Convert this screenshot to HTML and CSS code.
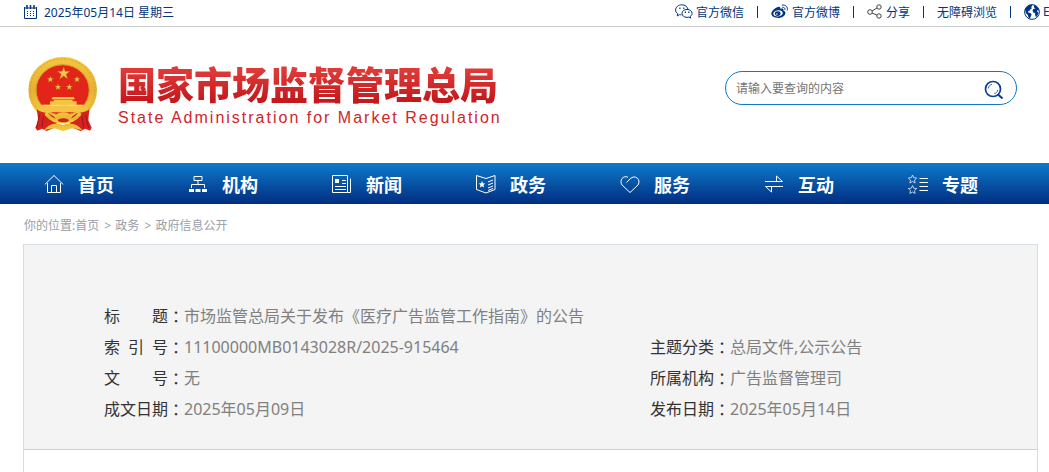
FILE: index.html
```
<!DOCTYPE html>
<html lang="zh-CN">
<head>
  <meta charset="UTF-8">
  <meta name="viewport" content="width=device-width, initial-scale=1.0">
  <title>国家市场监督管理总局</title>
  <link rel="stylesheet" href="styles.css">
</head>
<body>
  <!-- top bar -->
  <div class="topbar">
    <div class="date">
      <svg width="13" height="14" viewBox="0 0 13 14" fill="none" stroke="currentColor">
        <path d="M.5 2v11.500h12V2M0 3h13" />
        <path d="M3 0v4M6.500 0v4M10 0v4" stroke-width="1.500"/>
        <path d="M3 6.500h7M3 8.500h7M3 10.500h7" stroke-dasharray="1 2"/>
      </svg>
      <span>2025年05月14日 星期三</span>
    </div>
    <div class="top-links">
      <a href="#">
        <svg width="18" height="15" viewBox="0 0 18 15" fill="none" stroke="currentColor">
          <path d="M6.500 10.800c-.8 0-1.500 0-2-.2L2.300 12l.4-2.300C1.200 8.700.6 7.500.6 6 .6 3 3.400.8 6.800.8c3 0 5.500 1.700 6.100 4.200"/>
          <path d="M12 5.400c-2.800 0-5 1.800-5 4s2.200 4 5 4c.7 0 1.300-.1 1.800-.3l1.900 1-.5-1.700c1.200-.7 1.900-1.800 1.900-3 0-2.200-2.300-4-5.100-4z"/>
          <path d="M4.300 4.200h1.200M8.200 4.200h1.200M9.800 8.300H11M13.200 8.300h1.200" stroke-width="1.400"/>
        </svg>
        <span>官方微信</span>
      </a>
      <i class="sep"></i>
      <a href="#">
        <svg width="18" height="15" viewBox="0 0 18 15">
          <path fill="currentColor" fill-rule="evenodd" d="M6.800 3C8.500 2.300 9.600 3 9.200 4.800c2-.7 3.700-.2 3.200 1.600 1.300.5 2 1.300 2 2.500 0 2.700-3.500 5-7.300 5C3.300 13.900.3 12.100.3 9.500.3 7.200 3.800 4 6.800 3zM7 6.200c-2.800.2-4.700 1.700-4.700 3.500s2.100 2.900 4.800 2.700c2.700-.2 4.700-1.800 4.700-3.500S9.700 6 7 6.200z"/>
          <ellipse cx="6.700" cy="9.600" rx="2.800" ry="2.300" fill="currentColor"/>
          <circle cx="5.900" cy="10" r=".8" fill="#fff"/>
          <path d="M10.800 1.200c3.700-1 6.500 2 5.400 5.400M11.300 3.400c1.800-.4 3 .8 2.600 2.500" fill="none" stroke="currentColor"/>
        </svg>
        <span>官方微博</span>
      </a>
      <i class="sep"></i>
      <a href="#">
        <svg width="16" height="15" viewBox="0 0 16 15" fill="none" stroke="#444">
          <circle cx="3" cy="8" r="2.300"/>
          <circle cx="12" cy="3" r="2.200"/>
          <circle cx="12" cy="12" r="2.200"/>
          <path d="M5 7l5-3M5 9l5 2.200"/>
        </svg>
        <span>分享</span>
      </a>
      <i class="sep"></i>
      <a href="#">无障碍浏览</a>
      <i class="sep"></i>
      <a href="#">
        <svg width="16" height="16" viewBox="0 0 16 16">
          <circle cx="8" cy="8" r="7.400" fill="#fff" stroke="currentColor"/>
          <path fill="currentColor" d="M1 5.500C1.800 3 4 1.200 7.500.8L8.400 2 7 3l1 1.200-2 1.300-.6 1.700-1.500-.3.300 1.600 2 .5 1.500 1.500-1 2-.7 2.300C4.500 14 4 12.500 3.900 11L2 9.200zM9.800 1c3 .7 5 3 5.400 6l-1.500-1-.7 1.500 1.500 1.200-.9 2.600-1.500 2-1.100-2.500.2-1.800-2-.5-.7-2.200 1.300-1.500 1.800-.4-1.500-1z"/>
        </svg>
        <span>English</span>
      </a>
    </div>
  </div>

  <!-- logo + search -->
  <header class="header">
    <a href="#" class="logo">
      <svg width="70" height="75" viewBox="24 21 210 225">
        <defs>
          <linearGradient id="gold" x1="0" y1="0" x2="0" y2="1">
            <stop offset="0" stop-color="#f3c53c"/>
            <stop offset=".5" stop-color="#e5b034"/>
            <stop offset="1" stop-color="#f6cf3f"/>
          </linearGradient>
        </defs>
        <ellipse cx="128" cy="120" rx="91" ry="87" fill="#e32418" stroke="url(#gold)" stroke-width="24"/>
        <ellipse cx="128" cy="120" rx="97" ry="93" fill="none" stroke="#dba32b" stroke-width="3" stroke-dasharray="6 5"/>
        <ellipse cx="128" cy="120" rx="80" ry="76" fill="none" stroke="#d09a29" stroke-width="3"/>
        <g fill="#f8c544" stroke="#a8601b">
          <path d="M131 50l4.500 14H150l-11.500 8.500L143 87l-12-9-12 9 4.500-14.500L112 64h14.500z"/>
          <path d="M91 78l2.500 7H101l-6 4.500 2.500 7.500-6.500-4.500-6.500 4.500 2.500-7.500-6-4.500h7.500z"/>
          <path d="M171 78l2.500 7h7.500l-6 4.500 2.500 7.500-6.500-4.500-6.500 4.500 2.500-7.500-6-4.500h7.500z"/>
          <path d="M114 101l2.500 7h7.500l-6 4.500 2.500 7.500-6.500-4.500-6.500 4.500 2.500-7.500-6-4.500h7.500z"/>
          <path d="M148 101l2.500 7h7.500l-6 4.500 2.500 7.500-6.500-4.500-6.500 4.500 2.500-7.500-6-4.500h7.500z"/>
        </g>
        <path fill="#f7c344" d="M98 141h63l4 7H94zM101 149h57v5h-57zM90 154h80v10h24l-10 23H72l-10-23h28z"/>
        <path d="M70 166h118" stroke="#fff09a" stroke-width="2"/>
        <path fill="#d62320" d="M50 178c10 8 22 10 36 12l24 14v26l-30 13-14-7-14 6-6-9 9-22zM208 178c-10 8-24 10-38 12l-20 14v26l32 13 14-7 14 6 5-9-10-22z"/>
        <path d="M58 194l-8 40M70 198l-4 34M197 194l9 40M186 198l5 34" stroke="#9c161b" stroke-width="3"/>
        <path fill="none" stroke="url(#gold)" stroke-width="11" stroke-linecap="round" d="M80 193c12 15 25 22 49 22s38-8 49-22"/>
        <path fill="url(#gold)" d="M103 202c5-10 13-15 27-15s22 5 26 15l-8 8h-37zM72 240c16-19 35-24 57-15 22-9 42-4 58 15-18-4-27-6-39-3l-19 7-18-7c-12-3-22 0-39 3z"/>
        <ellipse cx="130" cy="211" rx="17" ry="6" fill="#d62320"/>
      </svg>
      <span class="site-name">
        <strong>国家市场监督管理总局</strong>
        <em>State Administration for Market Regulation</em>
      </span>
    </a>
    <form class="search">
      <input type="text" placeholder="请输入要查询的内容" aria-label="请输入要查询的内容">
      <button type="button" aria-label="搜索">
        <svg width="20" height="20" viewBox="0 0 20 20" fill="none" stroke="currentColor">
          <circle cx="9" cy="9" r="7.500" stroke-width="1.700"/>
          <path d="M14 14.500l4.500 4" stroke-width="2.200"/>
          <path d="M4.300 8.500C4.500 6.300 6 4.800 8 4.400M13.700 10c-.4 2-1.600 3.200-3.500 3.700" stroke-width=".8"/>
        </svg>
      </button>
    </form>
  </header>

  <!-- main nav -->
  <nav class="nav">
    <a href="#">
      <svg viewBox="0 0 20 20"><path d="M.8 10.500L10 1.500l9.200 9M3.500 9v9.500h13V9M7.500 18.500v-7h5v7"/></svg>
      <span>首页</span>
    </a>
    <a href="#">
      <svg viewBox="0 0 20 20"><path d="M6 2.500h8v4H6zM10 6.500v4M3.500 14v-3.500h13V14"/><path d="M1 16.500h5M7.500 16.500h5M14 16.500h5" stroke-width="3"/></svg>
      <span>机构</span>
    </a>
    <a href="#">
      <svg viewBox="0 0 20 20"><path d="M.5 1.500h15v17H.5zM15.500 18.500h3v-14M10 6.500h4M10 9.500h4M3 12.500h11M3 15.500h11"/><path d="M3 5h4v4H3z" fill="currentColor" stroke="none"/></svg>
      <span>新闻</span>
    </a>
    <a href="#">
      <svg viewBox="0 0 20 20"><path d="M.5 1.500l9.500 3 9-3v14L10 19l-9.500-3.500zM12 8l5-2M12 11l5-2M12 14l5-2M12 16.500l5-2"/><path d="M6 7l1 2.200 2.300.2L7.500 11l.6 2.500L6 12.200l-2.100 1.300.6-2.500-1.800-1.600 2.300-.2z" fill="currentColor" stroke="none"/></svg>
      <span>政务</span>
    </a>
    <a href="#">
      <svg viewBox="0 0 20 20"><path d="M6.500 8.500L10 5c5-5.200 11.500.5 8 6l-8 7.500L2 11C-1 6.500 3.200.8 8 3.300"/></svg>
      <span>服务</span>
    </a>
    <a href="#">
      <svg viewBox="0 0 20 20"><path d="M1 7.500h17.500L12.500 2v5M19 12.500H1.500L7.500 18v-5"/></svg>
      <span>互动</span>
    </a>
    <a href="#">
      <svg viewBox="0 0 20 20"><path d="M11.500 4.500H20M11.500 8.500H20M11.500 12.500H20M11.500 16.500H20"/><path stroke-width=".7" d="M4.500 1l1.200 2.700 3 .3-2.200 2 .6 3-2.600-1.500L1.900 9l.6-3L.3 4l3-.3zM4.500 11.500l1.200 2.700 3 .3-2.200 2 .6 3-2.600-1.500-2.600 1.500.6-3-2.200-2 3-.3z"/></svg>
      <span>专题</span>
    </a>
  </nav>

  <main class="content">
    <div class="breadcrumb">
      你的位置:<a href="#">首页</a> <span>&gt;</span> <a href="#">政务</a> <span>&gt;</span> <a href="#">政府信息公开</a>
    </div>

    <article class="article">
      <dl class="info">
        <div class="wide">
          <dt><span class="key"><b>标</b><b>题</b></span><span class="colon">：</span></dt>
          <dd>市场监管总局关于发布《医疗广告监管工作指南》的公告</dd>
        </div>
        <div>
          <dt><span class="key"><b>索</b><b>引</b><b>号</b></span><span class="colon">：</span></dt>
          <dd>11100000MB0143028R/2025-915464</dd>
        </div>
        <div>
          <dt><span class="key">主题分类</span><span class="colon">：</span></dt>
          <dd>总局文件,公示公告</dd>
        </div>
        <div>
          <dt><span class="key"><b>文</b><b>号</b></span><span class="colon">：</span></dt>
          <dd>无</dd>
        </div>
        <div>
          <dt><span class="key">所属机构</span><span class="colon">：</span></dt>
          <dd>广告监督管理司</dd>
        </div>
        <div>
          <dt><span class="key">成文日期</span><span class="colon">：</span></dt>
          <dd>2025年05月09日</dd>
        </div>
        <div>
          <dt><span class="key">发布日期</span><span class="colon">：</span></dt>
          <dd>2025年05月14日</dd>
        </div>
      </dl>
    </article>
  </main>
</body>
</html>
```
FILE: styles.css
```
:root {
  --navy: #003580;
  --blue: #0f7ac8;
  --red: #d0252a;
  --text: #333;
  --muted: #808080;
}

* {
  box-sizing: border-box;
}

body {
  margin: 0;
  font-family: "Noto Sans", "Noto Sans CJK SC", sans-serif;
  font-size: 12px;
  color: var(--text);
  background: #fff;
}

a {
  color: inherit;
  text-decoration: none;
}

svg {
  flex: none;
}

/* top bar */
.topbar {
  display: flex;
  justify-content: space-between;
  height: 27px;
  padding-left: 24px;
  padding-bottom: 3px;
  border-bottom: 1px solid #ccc;
  color: var(--navy);
  white-space: nowrap;
  overflow: hidden;
}

.date {
  display: flex;
  align-items: center;
  gap: 7px;
}

.top-links {
  display: flex;
  align-items: center;
  gap: 13px;
  width: 374px;
  overflow: hidden;
}

.top-links a {
  display: flex;
  align-items: center;
  gap: 3px;
  flex: none;
}

.sep {
  width: 1px;
  height: 12px;
  flex: none;
  background: var(--navy);
}

/* header */
.header {
  display: flex;
  justify-content: space-between;
  align-items: flex-start;
  padding: 30px 32px 31px 28px;
}

.logo {
  display: flex;
  gap: 20px;
}

.site-name {
  display: flex;
  flex-direction: column;
  padding-top: 4px;
}

.site-name strong {
  font-size: 38px;
  line-height: 46px;
  font-weight: 900;
  background: linear-gradient(#e03a38 20%, #c41a1e 85%);
  -webkit-background-clip: text;
  background-clip: text;
  color: transparent;
}

.site-name em {
  font-family: "Liberation Sans", Arial, sans-serif;
  font-size: 16px;
  line-height: 22px;
  font-style: normal;
  letter-spacing: 2px;
  color: var(--red);
}

.search {
  display: flex;
  align-items: center;
  width: 292px;
  height: 34px;
  margin-top: 14px;
  padding: 0 12px 0 10px;
  border: 1px solid var(--blue);
  border-radius: 17px;
}

.search input {
  flex: 1;
  min-width: 0;
  padding: 0;
  border: none;
  outline: none;
  background: none;
  font: inherit;
}

.search input::placeholder {
  color: #757575;
}

.search button {
  display: flex;
  padding: 4px 0 0;
  border: none;
  background: none;
  color: #0b4192;
  cursor: pointer;
}

/* nav */
.nav {
  display: flex;
  height: 41px;
  padding-left: 44px;
  background: linear-gradient(#0f7acb, #002d80);
  color: #fff;
  overflow: hidden;
}

.nav a {
  display: flex;
  flex: none;
  align-items: center;
  gap: 14px;
  width: 144px;
  font-size: 18px;
  font-weight: bold;
}

.nav svg {
  width: 20px;
  height: 20px;
  fill: none;
  stroke: currentColor;
}

/* content */
.content {
  padding: 0 11px 0 23px;
}

.breadcrumb {
  padding: 3px 0 0 1px;
  line-height: 37px;
  color: #999ea8;
}

.breadcrumb span {
  margin: 0 1px 0 2px;
}

.article {
  min-height: 228px;
  border: 1px solid #d5dde6;
  border-bottom: none;
}

.info {
  display: grid;
  grid-template-columns: 546fr 387fr;
  margin: 0;
  padding: 56px 0 24px 80px;
  border-bottom: 1px solid #d0d0d0;
  background: #f4f4f4;
  font-size: 16px;
  line-height: 31px;
}

.info div {
  display: flex;
}

.info .wide {
  grid-column: span 2;
}

.info dt {
  display: flex;
  flex: none;
  white-space: nowrap;
}

.info dd {
  margin: 0;
  color: var(--muted);
}

.key {
  display: flex;
  justify-content: space-between;
  width: 64px;
}

.key b {
  font-weight: normal;
}

.colon {
  width: 16px;
  font-family: "Noto Sans CJK JP", sans-serif;
}
```
